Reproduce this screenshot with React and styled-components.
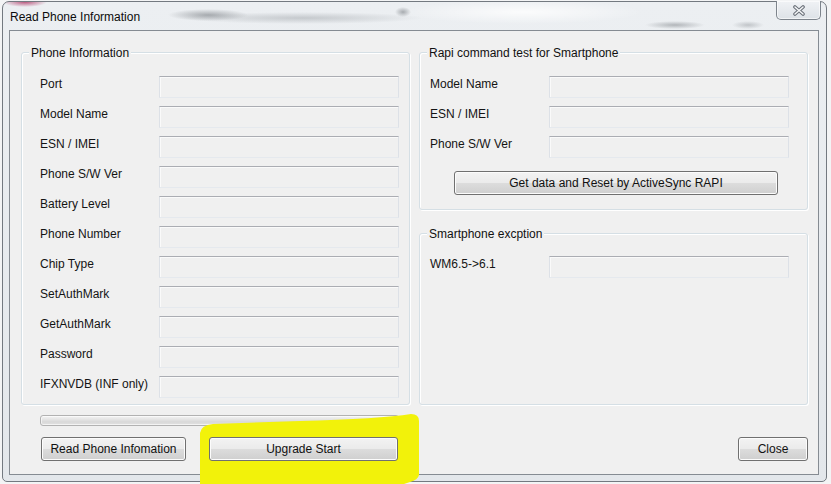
import React from 'react';
import styled, { createGlobalStyle } from 'styled-components';

const GlobalStyle = createGlobalStyle`
  html, body {
    margin: 0;
    padding: 0;
    background: #f2f3f4;
  }
  body {
    font-family: "Liberation Sans", Arial, sans-serif;
    font-size: 12px;
    color: #111;
  }
`;

const Screen = styled.div`
  position: relative;
  width: 831px;
  height: 484px;
  overflow: hidden;
  background: #f3f4f5;
`;

const Window = styled.div`
  box-sizing: border-box;
  width: 825px;
  height: 481px;
  margin: 1px 0 0 2px;
  padding: 0 7px 6px 6px;
  display: flex;
  flex-direction: column;
  border: 1px solid #737980;
  border-radius: 7px 7px 5px 5px;
  background:
    radial-gradient(ellipse 22px 5px at 22px 0px, rgba(170, 40, 90, 0.75), transparent),
    radial-gradient(ellipse 40px 6px at 205px 13px, rgba(110, 115, 120, 0.55), transparent),
    radial-gradient(ellipse 120px 6px at 300px 16px, rgba(150, 155, 160, 0.45), transparent),
    radial-gradient(ellipse 8px 5px at 400px 10px, rgba(110, 115, 120, 0.55), transparent),
    radial-gradient(ellipse 30px 4px at 672px 23px, rgba(120, 125, 130, 0.5), transparent),
    radial-gradient(ellipse 16px 4px at 745px 23px, rgba(140, 145, 150, 0.45), transparent),
    radial-gradient(ellipse 120px 12px at 520px 10px, rgba(255, 255, 255, 0.8), transparent),
    linear-gradient(to bottom, #eceff2, #e3e7eb);
`;

const TitleBar = styled.div`
  height: 28px;
  display: flex;
  align-items: center;
  padding-left: 1px;
`;

const Title = styled.span`
  font-size: 12px;
  color: #0c0c0c;
  margin-top: 2px;
`;

const CloseBox = styled.div`
  box-sizing: border-box;
  align-self: flex-start;
  margin: -1px -2px 0 auto;
  width: 45px;
  height: 19px;
  display: flex;
  align-items: center;
  justify-content: center;
  border: 1px solid #7d848c;
  border-top: none;
  border-radius: 0 0 5px 5px;
  background: linear-gradient(to bottom, #f0f2f5, #dde2e7);
  box-shadow: inset 0 0 0 1px rgba(255, 255, 255, 0.6);
`;

const Client = styled.div`
  box-sizing: border-box;
  height: 445px;
  padding: 0 10px 0 11px;
  border: 1px solid #858b92;
  background: #f0f0f0;
  display: flex;
  flex-direction: column;
`;

const Columns = styled.div`
  display: grid;
  grid-template-columns: 389px 389px;
  column-gap: 9px;
  margin-top: 21px;
`;

const Stack = styled.div`
  display: flex;
  flex-direction: column;
  gap: 23px;
`;

const Group = styled.div`
  position: relative;
  box-sizing: border-box;
  height: ${p => p.h}px;
  padding: ${p => p.pad};
  border: 1px solid #d5dfe5;
  border-radius: 3px;
  box-shadow: inset 1px 1px 0 #fff, 1px 1px 0 #fff;
  display: flex;
  flex-direction: column;
  gap: 8px;
`;

const GroupTitle = styled.span`
  position: absolute;
  top: -7px;
  left: 7px;
  padding: 0 2px;
  line-height: 14px;
  background: #f0f0f0;
  color: #111;
`;

const Row = styled.div`
  display: flex;
  align-items: flex-start;
  height: 22px;
`;

const Label = styled.span`
  width: 119px;
  flex: none;
  padding-top: 1px;
  line-height: 14px;
  color: #141414;
`;

const Field = styled.div`
  box-sizing: border-box;
  width: 240px;
  height: 22px;
  background: #f0f0f0;
  border: 1px solid #dde1e7;
  border-top-color: #abadb3;
  border-bottom-color: #e5e9ee;
  box-shadow: inset 1px 1px 0 #fafafa;
`;

const Button = styled.button`
  position: relative;
  z-index: 2;
  box-sizing: border-box;
  width: ${p => p.w}px;
  height: 24px;
  margin: ${p => p.m || '0'};
  padding: 0;
  border: 1px solid #707070;
  border-radius: 3px;
  background: linear-gradient(to bottom, #f3f3f3 0%, #ebebeb 48%, #dcdcdc 52%, #cfcfcf 100%);
  box-shadow: inset 0 0 0 1px #fcfcfc;
  font-family: "Liberation Sans", Arial, sans-serif;
  font-size: 12px;
  color: #111;
`;

const Progress = styled.div`
  box-sizing: border-box;
  width: 359px;
  height: 11px;
  margin: 10px 0 0 19px;
  border: 1px solid #b2b2b2;
  border-radius: 3px;
  background: linear-gradient(to bottom, #f4f4f4 0%, #e6e6e6 35%, #d8d8d8 65%, #e2e2e2 100%);
  box-shadow: inset 0 0 0 1px rgba(255, 255, 255, 0.6);
`;

const ButtonBar = styled.div`
  display: flex;
  margin-top: 11px;
`;

const Highlight = styled.svg`
  position: absolute;
  left: 0;
  top: 0;
  z-index: 1;
  pointer-events: none;
`;

const leftRows = [
  'Port',
  'Model Name',
  'ESN / IMEI',
  'Phone S/W Ver',
  'Battery Level',
  'Phone Number',
  'Chip Type',
  'SetAuthMark',
  'GetAuthMark',
  'Password',
  'IFXNVDB (INF only)',
];

const rapiRows = ['Model Name', 'ESN / IMEI', 'Phone S/W Ver'];

const CloseGlyph = () => (
  <svg width="14" height="11" viewBox="0 0 14 11">
    <g strokeLinecap="round">
      <path d="M3 2 L11 9 M11 2 L3 9" stroke="#6a7078" strokeWidth="3.6" />
      <path d="M3 2 L11 9 M11 2 L3 9" stroke="#f6f7f9" strokeWidth="1.5" />
    </g>
  </svg>
);

const App = () => (
  <Screen>
    <GlobalStyle />
    <Window>
      <TitleBar>
        <Title>Read Phone Information</Title>
        <CloseBox>
          <CloseGlyph />
        </CloseBox>
      </TitleBar>
      <Client>
        <Columns>
          <Group h={353} pad="23px 10px 0 18px">
            <GroupTitle>Phone Information</GroupTitle>
            {leftRows.map(label => (
              <Row key={label}>
                <Label>{label}</Label>
                <Field />
              </Row>
            ))}
          </Group>
          <Stack>
            <Group h={158} pad="23px 18px 0 10px">
              <GroupTitle>Rapi command test for Smartphone</GroupTitle>
              {rapiRows.map(label => (
                <Row key={label}>
                  <Label>{label}</Label>
                  <Field />
                </Row>
              ))}
              <Button w={324} m="5px 0 0 24px">
                Get data and Reset by ActiveSync RAPI
              </Button>
            </Group>
            <Group h={172} pad="22px 18px 0 10px">
              <GroupTitle>Smartphone excption</GroupTitle>
              <Row>
                <Label>WM6.5-&gt;6.1</Label>
                <Field />
              </Row>
            </Group>
          </Stack>
        </Columns>
        <Progress />
        <ButtonBar>
          <Button w={145} m="0 0 0 20px">Read Phone Infomation</Button>
          <Button w={189} m="0 0 0 23px">Upgrade Start</Button>
          <Button w={70} m="0 0 0 auto">Close</Button>
        </ButtonBar>
      </Client>
    </Window>
    <Highlight width="831" height="484" viewBox="0 0 831 484">
      <path
        d="M200 484 L200 433 Q201 425 213 424 L300 421 Q380 419 411 414 Q419 414 419 421 L419 475 Q418 480 410 482 L404 484 Z"
        fill="#f2f20a"
      />
    </Highlight>
  </Screen>
);

export default App;
